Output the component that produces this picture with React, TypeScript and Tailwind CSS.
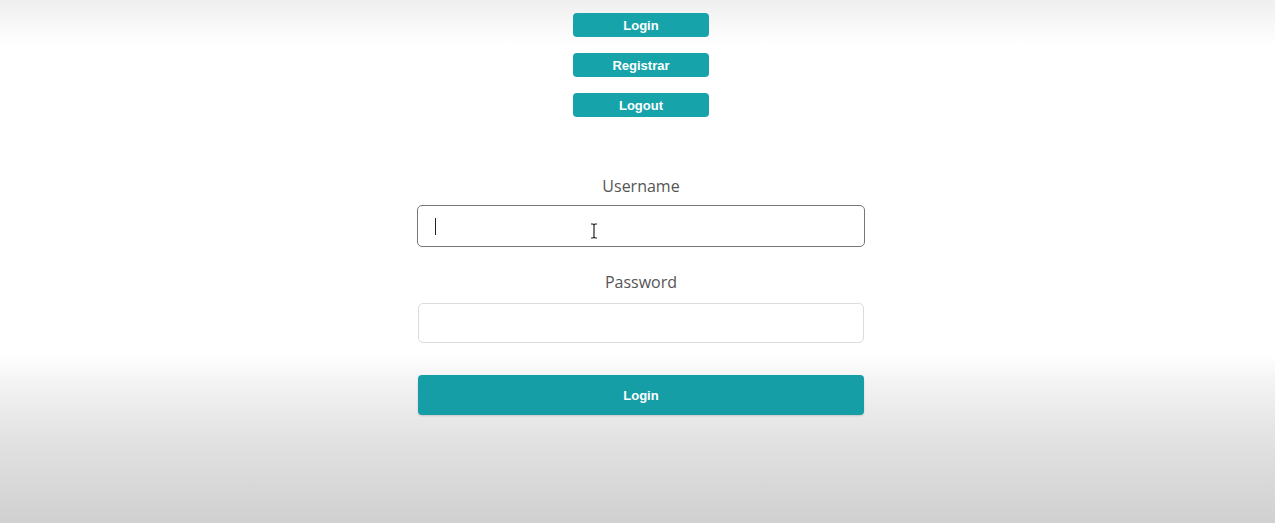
export default function App() {
  return (
    <div className="h-[523px] w-full overflow-hidden bg-[linear-gradient(to_bottom,#efefef_0px,#ffffff_45px,#ffffff_355px,#f4f4f4_380px,#e2e2e2_440px,#d0d0d0_523px)] pl-[7px] font-['Liberation_Sans',sans-serif]">
      {/* nav buttons */}
      <div className="flex flex-col items-center gap-4 pt-[13px]">
        {["Login", "Registrar", "Logout"].map((t) => (
          <button
            key={t}
            className="h-6 w-[136px] rounded-[4px] bg-[#17a3aa] pt-px text-[13px] font-bold text-white"
          >
            {t}
          </button>
        ))}
      </div>

      {/* form */}
      <div className="mx-auto mt-[57px] flex w-[448px] flex-col items-center">
        <label className="font-['Open_Sans',sans-serif] text-[16px] leading-6 text-[#555]">Username</label>
        <div className="relative mt-[7px] h-[42px] w-[448px] rounded-[5px] border border-[#777] bg-white">
          <span className="absolute left-[17px] top-[12px] h-[17px] w-px bg-[#222]" />
          <svg className="absolute left-[172px] top-[17px]" width="8" height="16" viewBox="0 0 8 16">
            <path d="M1 1h2l1 1 1-1h2M4 2v12M1 15h2l1-1 1 1h2" fill="none" stroke="#222" strokeWidth="1.2" />
          </svg>
        </div>

        <label className="mt-[23px] font-['Open_Sans',sans-serif] text-[16px] leading-6 text-[#555]">Password</label>
        <div className="mt-[9px] h-[40px] w-[446px] rounded-[5px] border border-[#dcdcdc] bg-white" />

        <button className="mt-[32px] h-[40px] w-[446px] rounded-[4px] bg-[#169ea6] pt-px text-[13px] font-semibold text-white shadow-[0_1px_2px_rgba(0,0,0,0.15)]">
          Login
        </button>
      </div>
    </div>
  );
}
